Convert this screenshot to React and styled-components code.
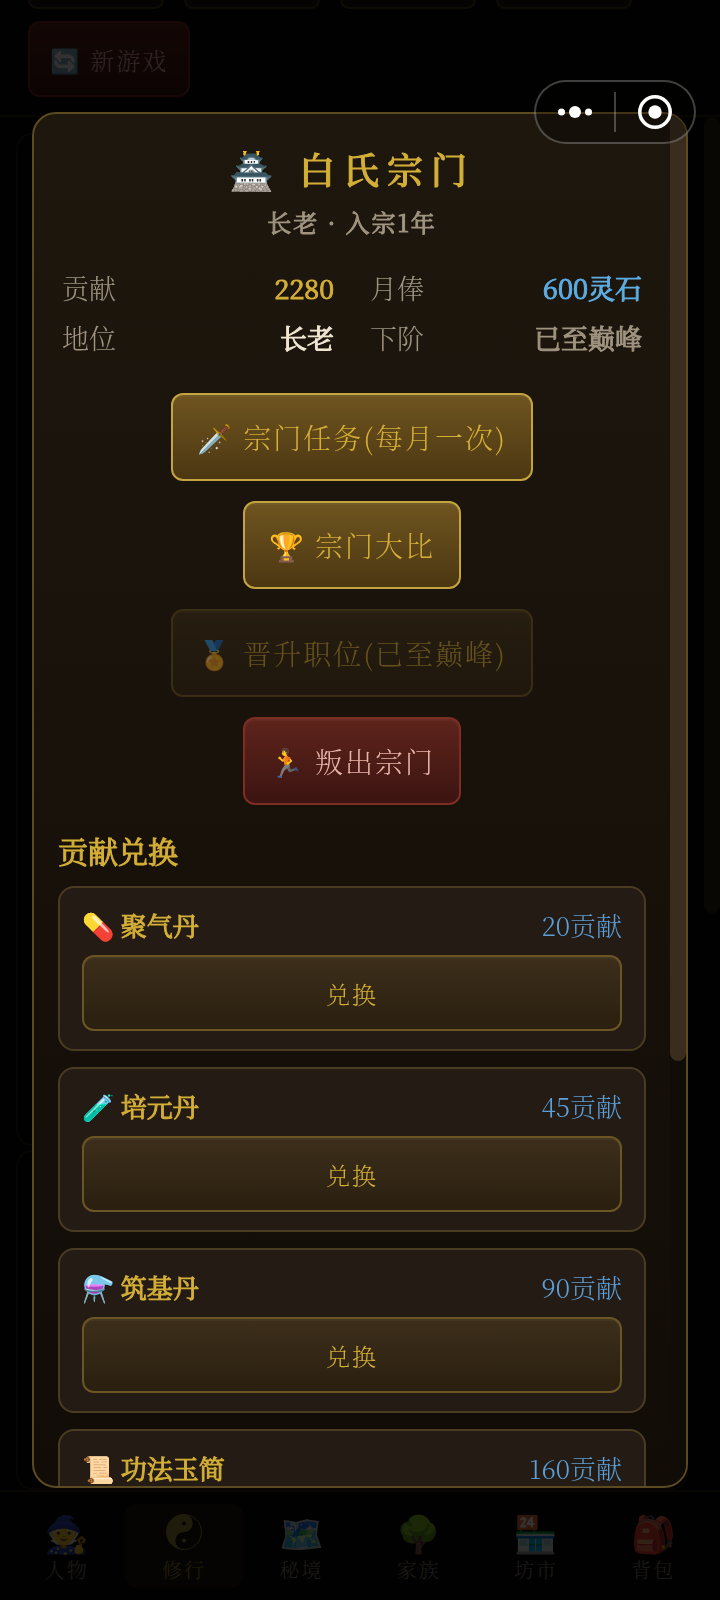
import React from "react";
import styled, { createGlobalStyle, css } from "styled-components";

const actions = [
  { icon: "🗡️", label: "宗门任务(每月一次)", kind: "primary" },
  { icon: "🏆", label: "宗门大比", kind: "primary" },
  { icon: "🏅", label: "晋升职位(已至巅峰)", kind: "normal", disabled: true },
  { icon: "🏃", label: "叛出宗门", kind: "danger" },
];

const goods = [
  { icon: "💊", name: "聚气丹", price: 20 },
  { icon: "🧪", name: "培元丹", price: 45 },
  { icon: "⚗️", name: "筑基丹", price: 90 },
  { icon: "📜", name: "功法玉简", price: 160 },
];

const tabs = [
  { icon: "🧙", label: "人物" },
  { icon: <YinYang />, label: "修行", active: true },
  { icon: "🗺️", label: "秘境" },
  { icon: "🌳", label: "家族" },
  { icon: "🏪", label: "坊市" },
  { icon: "🎒", label: "背包" },
];

function YinYang() {
  return (
    <YinYangSvg width="38" height="38" viewBox="0 0 38 38">
      <circle cx="19" cy="19" r="17.5" fill="none" stroke="#a08a3c" />
      <path
        d="M19 1.5a17.5 17.5 0 0 0 0 35a8.75 8.75 0 0 1 0 -17.5a8.75 8.75 0 0 0 0 -17.5z"
        fill="#a08a3c"
      />
      <circle cx="19" cy="10.5" r="2" fill="#1f180a" />
      <circle cx="19" cy="27.5" r="2" fill="#a08a3c" />
    </YinYangSvg>
  );
}

export default function App() {
  return (
    <>
      <GlobalStyle />
      <Page>
        <Header>
          <HeaderCards>
            <HeaderCard />
            <HeaderCard />
            <HeaderCard />
            <HeaderCard />
          </HeaderCards>
          <NewGameButton>🔄 新游戏</NewGameButton>
        </Header>
        <Content>
          <Panels>
            <Panel $grow={3} />
            <Panel $grow={1} />
          </Panels>
          <PageTrack>
            <PageThumb />
          </PageTrack>
        </Content>
        <TabBar>
          {tabs.map((tab) => (
            <Tab key={tab.label} $active={tab.active}>
              <TabIcon>{tab.icon}</TabIcon>
              <TabLabel>{tab.label}</TabLabel>
            </Tab>
          ))}
        </TabBar>
      </Page>

      <Overlay>
        <Modal role="dialog" aria-labelledby="sect-title">
          <ModalBody>
            <ModalTitle id="sect-title">🏯 白氏宗门</ModalTitle>
            <ModalSubtitle>长老 · 入宗1年</ModalSubtitle>
            <Stats>
              <Stat>
                贡献 <StatValue $color="#d4af37">2280</StatValue>
              </Stat>
              <Stat>
                月俸 <StatValue $color="#5dade2">600灵石</StatValue>
              </Stat>
              <Stat>
                地位 <StatValue $color="#f0e6d2">长老</StatValue>
              </Stat>
              <Stat>
                下阶 <StatValue $color="#a09480">已至巅峰</StatValue>
              </Stat>
            </Stats>
            <Actions>
              {actions.map((action) => (
                <ActionButton
                  key={action.label}
                  $kind={action.kind}
                  disabled={action.disabled}
                >
                  {action.icon} {action.label}
                </ActionButton>
              ))}
            </Actions>
            <SectionTitle>贡献兑换</SectionTitle>
            <GoodsList>
              {goods.map((item) => (
                <GoodsCard key={item.name}>
                  <GoodsHead>
                    <GoodsName>
                      {item.icon} {item.name}
                    </GoodsName>
                    <GoodsPrice>{item.price}贡献</GoodsPrice>
                  </GoodsHead>
                  <ExchangeButton>兑换</ExchangeButton>
                </GoodsCard>
              ))}
            </GoodsList>
          </ModalBody>
          <ScrollTrack>
            <ScrollThumb />
          </ScrollTrack>
        </Modal>
      </Overlay>

      <Capsule>
        <CapsuleButton aria-label="更多">
          <svg width="36" height="14" viewBox="0 0 36 14" fill="#fff">
            <circle cx="4.5" cy="7" r="3.5" />
            <circle cx="18" cy="7" r="6" />
            <circle cx="31.5" cy="7" r="3.5" />
          </svg>
        </CapsuleButton>
        <CapsuleDivider />
        <CapsuleButton aria-label="关闭">
          <svg width="34" height="34" viewBox="0 0 34 34">
            <circle cx="17" cy="17" r="15.2" fill="none" stroke="#fff" strokeWidth="3.5" />
            <circle cx="17" cy="17" r="6.7" fill="#fff" />
          </svg>
        </CapsuleButton>
      </Capsule>
    </>
  );
}

const GlobalStyle = createGlobalStyle`
  * {
    box-sizing: border-box;
  }
  body {
    margin: 0;
    background: #0a0805;
  }
  body, button {
    font-family: "Noto Serif CJK SC", "Noto Serif SC", "Noto Sans CJK SC", serif;
    font-weight: 300;
  }
  h2, h3, p {
    margin: 0;
  }
`;

/* the regular cut, thickened evenly */
const strong = css`
  font-weight: 400;
  -webkit-text-stroke: 1px currentColor;
`;

const Page = styled.div`
  display: flex;
  flex-direction: column;
  height: 100vh;
  overflow: hidden;
`;

const Header = styled.header`
  padding: 0 28px 18px;
  border-bottom: 2px solid #2c2413;
`;

const HeaderCards = styled.div`
  display: flex;
  gap: 20px;
  margin-bottom: 12px;
`;

const HeaderCard = styled.div`
  width: 136px;
  height: 9px;
  border: 2px solid #4a3c1a;
  border-top: 0;
  border-radius: 0 0 12px 12px;
  background: #1c160e;
`;

const dangerLook = css`
  border: 2px solid #7d2c26;
  background: linear-gradient(180deg, #5e241b, #3c1411);
  color: #e8b4aa;
`;

const NewGameButton = styled.button`
  ${dangerLook}
  height: 76px;
  padding: 0 20px;
  border-radius: 12px;
  font-size: 24px;
  letter-spacing: 2px;
`;

const Content = styled.main`
  display: flex;
  flex: 1;
  min-height: 0;
`;

const Panels = styled.div`
  display: flex;
  flex: 1;
  flex-direction: column;
  gap: 4px;
  padding: 16px 16px 0;
`;

const Panel = styled.div`
  flex: ${(props) => props.$grow};
  border: 2px solid #241d10;
  border-radius: 16px;
`;

const PageTrack = styled.div`
  width: 16px;
`;

const PageThumb = styled.div`
  height: 58%;
  border-radius: 8px;
  background: #2a2313;
`;

const TabBar = styled.nav`
  display: flex;
  height: 110px;
  padding: 12px 8px;
  border-top: 2px solid #2c2413;
`;

const Tab = styled.button`
  display: flex;
  flex: 1;
  flex-direction: column;
  align-items: center;
  justify-content: flex-end;
  padding: 0 0 4px;
  border: 0;
  border-radius: 12px;
  background: ${(props) => (props.$active ? "#1f180a" : "none")};
  color: ${(props) => (props.$active ? "#a08a3c" : "#8a8070")};
`;

const TabIcon = styled.span`
  display: flex;
  align-items: center;
  height: 48px;
  font-size: 36px;
  line-height: 48px;
`;

const TabLabel = styled.span`
  font-size: 20px;
  line-height: 28px;
  letter-spacing: 2px;
`;

const YinYangSvg = styled.svg`
  display: block;
`;

const Overlay = styled.div`
  position: fixed;
  inset: 0;
  display: flex;
  align-items: center;
  justify-content: center;
  padding: 0 32px;
  background: rgba(0, 0, 0, 0.8);
`;

const Modal = styled.section`
  display: flex;
  width: 100%;
  height: 86vh;
  border: 2px solid #5c4a20;
  border-radius: 24px;
  background: linear-gradient(180deg, #1e170e, #120c07);
  overflow: hidden;
`;

const ModalBody = styled.div`
  flex: 1;
  padding: 24px;
  overflow: hidden;
`;

const ScrollTrack = styled.div`
  width: 16px;
  background: #100c08;
`;

const ScrollThumb = styled.div`
  height: 69%;
  border-radius: 8px;
  background: #3a2d1d;
`;

const ModalTitle = styled.h2`
  ${strong}
  margin-bottom: 4px;
  color: #d4af37;
  font-size: 36px;
  font-weight: 500;
  line-height: 62px;
  letter-spacing: 8px;
  text-align: center;
`;

const ModalSubtitle = styled.p`
  ${strong}
  color: #a09480;
  font-size: 24px;
  line-height: 36px;
  letter-spacing: 2px;
  text-align: center;
`;

const Stats = styled.div`
  display: grid;
  grid-template-columns: 1fr 1fr;
  gap: 2px 28px;
  margin: 24px 0 31px;
`;

const Stat = styled.div`
  display: flex;
  justify-content: space-between;
  padding: 0 4px;
  color: #a09480;
  font-size: 27px;
  line-height: 48px;
`;

const StatValue = styled.span`
  ${strong}
  color: ${(props) => props.$color};
`;

const Actions = styled.div`
  display: flex;
  flex-direction: column;
  align-items: center;
  gap: 20px;
`;

const normalLook = css`
  border: 2px solid #6b5523;
  background: linear-gradient(180deg, #3c2e1a, #2a1f10);
  color: #d4af37;
`;

const primaryLook = css`
  border: 2px solid #c4a440;
  background: linear-gradient(180deg, #6e541f, #4c3712);
  color: #d4af37;
`;

const looks = { normal: normalLook, primary: primaryLook, danger: dangerLook };

const ActionButton = styled.button`
  ${(props) => looks[props.$kind]}
  height: 88px;
  padding: 0 24px;
  border-radius: 12px;
  box-shadow: inset 0 2px 0 rgba(255, 255, 255, 0.04);
  font-size: 28px;
  letter-spacing: 2px;
  cursor: pointer;

  &:disabled {
    opacity: 0.4;
    cursor: default;
  }
`;

const SectionTitle = styled.h3`
  ${strong}
  margin: 25px 0 16px;
  color: #d4af37;
  font-size: 30px;
  line-height: 40px;
`;

const GoodsList = styled.div`
  display: flex;
  flex-direction: column;
  gap: 16px;
`;

const GoodsCard = styled.article`
  display: flex;
  flex-direction: column;
  gap: 10px;
  padding: 16px 22px 18px;
  border: 2px solid #4a3c22;
  border-radius: 16px;
  background: #241b15;
`;

const GoodsHead = styled.div`
  display: flex;
  justify-content: space-between;
  font-size: 26px;
  line-height: 41px;
`;

const GoodsName = styled.span`
  ${strong}
  color: #d4af37;
`;

const GoodsPrice = styled.span`
  color: #5a9fd8;
`;

const ExchangeButton = styled.button`
  ${normalLook}
  height: 76px;
  border-radius: 12px;
  box-shadow: inset 0 2px 0 rgba(255, 255, 255, 0.04);
  font-size: 24px;
  letter-spacing: 2px;
  cursor: pointer;
`;

/* floats above the page like the host app's own menu */
const Capsule = styled.div`
  position: fixed;
  top: 80px;
  right: 24px;
  display: flex;
  align-items: center;
  width: 162px;
  height: 64px;
  border: 2px solid rgba(255, 255, 255, 0.25);
  border-radius: 32px;
  background: rgba(0, 0, 0, 0.3);
`;

const CapsuleButton = styled.button`
  display: flex;
  flex: 1;
  align-items: center;
  justify-content: center;
  padding: 0;
  border: 0;
  background: none;
`;

const CapsuleDivider = styled.div`
  width: 2px;
  height: 40px;
  background: rgba(255, 255, 255, 0.25);
`;
